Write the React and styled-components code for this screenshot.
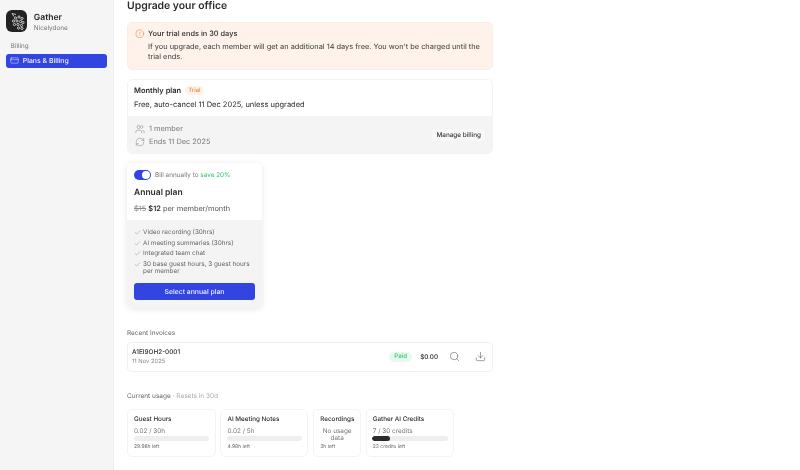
import React from 'react';
import styled, { createGlobalStyle } from 'styled-components';
import { Check, CircleAlert, CreditCard, Download, RefreshCw, Search, Users } from 'lucide-react';

const GlobalStyle = createGlobalStyle`
  html, body {
    margin: 0;
    height: 100%;
    overflow: hidden;
    background: #fff;
  }
  * {
    box-sizing: border-box;
  }
  body {
    font-family: Inter, "Liberation Sans", sans-serif;
    color: #2b2b2b;
    text-rendering: geometricPrecision;
  }
`;

const features = [
  'Video recording (30hrs)',
  'AI meeting summaries (30hrs)',
  'Integrated team chat',
  '30 base guest hours, 3 guest hours per member',
];

const usage = [
  { name: 'Guest Hours', value: '0.02 / 30h', left: '29.98h left', width: 88.7, fill: 0 },
  { name: 'AI Meeting Notes', value: '0.02 / 5h', left: '4.98h left', width: 88, fill: 0 },
  { name: 'Recordings', value: 'No usage data', left: '3h left', width: 47.7, empty: true },
  { name: 'Gather AI Credits', value: '7 / 30 credits', left: '23 credits left', width: 88.6, fill: 23 },
];

function Logo() {
  const dots = [
    [9.5, 8], [13, 7], [16, 8.5], [7.5, 11], [11, 11], [14.5, 11.5], [17, 12.5], [8.5, 14.5], [12, 14.5], [15.5, 15.5], [12.5, 18], [16, 18.5],
  ];
  return (
    <LogoBox>
      <svg width='21' height='22' viewBox='0 0 21 22' fill='none'>
        <path d='M6 3.5 L8 6.5 M6 3.5 L10 4.5' stroke='#e8e8e8' strokeWidth='0.8' />
        {dots.map(([cx, cy]) => (
          <circle key={`${cx}-${cy}`} cx={cx} cy={cy} r='1.1' stroke='#e8e8e8' strokeWidth='0.8' />
        ))}
      </svg>
    </LogoBox>
  );
}

function App() {
  return (
    <Page>
      <GlobalStyle />
      <Sidebar>
        <Brand>
          <Logo />
          <BrandText>
            <BrandName>Gather</BrandName>
            <BrandSub>Nicelydone</BrandSub>
          </BrandText>
        </Brand>
        <NavLabel>Billing</NavLabel>
        <NavItem>
          <CreditCard size={9} strokeWidth={1.3} />
          Plans &amp; Billing
        </NavItem>
      </Sidebar>
      <Main>
        <Title>Upgrade your office</Title>
        <Alert>
          <AlertHead>
            <CircleAlert size={9.5} color='#ee8a4a' strokeWidth={1.5} />
            Your trial ends in 30 days
          </AlertHead>
          <AlertText>
            If you upgrade, each member will get an additional 14 days free. You won't be charged until the trial ends.
          </AlertText>
        </Alert>
        <PlanCard>
          <PlanTop>
            <PlanHead>
              <PlanName>Monthly plan</PlanName>
              <TrialBadge>Trial</TrialBadge>
            </PlanHead>
            <PlanText>Free, auto-cancel 11 Dec 2025, unless upgraded</PlanText>
          </PlanTop>
          <PlanFooter>
            <MetaList>
              <MetaRow>
                <Users size={10} strokeWidth={1.1} />
                1 member
              </MetaRow>
              <MetaRow>
                <RefreshCw size={10} strokeWidth={1.1} />
                Ends 11 Dec 2025
              </MetaRow>
            </MetaList>
            <GhostButton>Manage billing</GhostButton>
          </PlanFooter>
        </PlanCard>
        <AnnualCard>
          <AnnualTop>
            <ToggleRow>
              <Toggle />
              <span>Bill annually to <Save>save 20%</Save></span>
            </ToggleRow>
            <AnnualName>Annual plan</AnnualName>
            <Price>
              <s>$15</s> <strong>$12</strong> per member/month
            </Price>
          </AnnualTop>
          <AnnualBottom>
            <FeatureList>
              {features.map((feature) => (
                <Feature key={feature}>
                  <Check size={7} strokeWidth={1.2} />
                  <span>{feature}</span>
                </Feature>
              ))}
            </FeatureList>
            <PrimaryButton>Select annual plan</PrimaryButton>
          </AnnualBottom>
        </AnnualCard>
        <SectionLabel>Recent Invoices</SectionLabel>
        <Invoice>
          <div>
            <InvoiceId>A1EI9OH2-0001</InvoiceId>
            <InvoiceDate>11 Nov 2025</InvoiceDate>
          </div>
          <InvoiceRight>
            <PaidBadge>Paid</PaidBadge>
            <Amount>$0.00</Amount>
            <IconSlot><Search size={11} strokeWidth={1.1} /></IconSlot>
            <IconSlot><Download size={11} strokeWidth={1.1} /></IconSlot>
          </InvoiceRight>
        </Invoice>
        <UsageLabel>
          Current usage <Muted>· Resets in 30d</Muted>
        </UsageLabel>
        <UsageRow>
          {usage.map((item) => (
            <UsageCard key={item.name} $width={item.width}>
              <UsageName>{item.name}</UsageName>
              {item.empty ? (
                <NoData>{item.value}</NoData>
              ) : (
                <>
                  <UsageValue>{item.value}</UsageValue>
                  <Track>{item.fill > 0 && <Fill style={{ width: `${item.fill}%` }} />}</Track>
                </>
              )}
              <UsageLeft>{item.left}</UsageLeft>
            </UsageCard>
          ))}
        </UsageRow>
      </Main>
    </Page>
  );
}

const Page = styled.div`
  display: flex;
  width: 800px;
  height: 470px;
  overflow: hidden;
  will-change: transform;
`;

const Sidebar = styled.aside`
  width: 114px;
  flex-shrink: 0;
  padding: 10px 6.3px;
  background: #f5f5f5;
  border-right: 1px solid #efefef;
`;

const Brand = styled.div`
  display: flex;
  align-items: flex-start;
  gap: 6.5px;
`;

const LogoBox = styled.div`
  width: 21px;
  height: 22px;
  border-radius: 6px;
  background: #232323;
  display: flex;
`;

const BrandText = styled.div`
  padding-top: 1.5px;
`;

const BrandName = styled.div`
  font-size: 8.6px;
  font-weight: 600;
  line-height: 12px;
`;

const BrandSub = styled.div`
  font-size: 6.4px;
  line-height: 9px;
  color: #777;
`;

const NavLabel = styled.div`
  margin: 9.5px 0 0 4.5px;
  font-size: 6.3px;
  line-height: 9px;
  color: #777;
`;

const NavItem = styled.div`
  display: flex;
  align-items: center;
  gap: 3.5px;
  height: 14.5px;
  margin-top: 2.5px;
  padding-left: 4px;
  border-radius: 3px;
  background: #3245e0;
  color: #f2f3ff;
  font-size: 6.9px;
  font-weight: 500;
`;

const Main = styled.main`
  width: 366px;
  margin: -2px 0 0 13px;
`;

const Title = styled.h1`
  margin: 0;
  font-size: 10.4px;
  font-weight: 600;
  line-height: 15px;
`;

const Alert = styled.div`
  margin-top: 8.5px;
  height: 48.5px;
  padding: 6px 7px;
  background: #fef2ea;
  border: 1px solid #fcede3;
  border-radius: 5px;
`;

const AlertHead = styled.div`
  display: flex;
  align-items: center;
  gap: 3.5px;
  font-size: 7.4px;
  font-weight: 500;
  line-height: 10px;
`;

const AlertText = styled.p`
  margin: 3px 0 0 13px;
  font-size: 7.4px;
  line-height: 10.3px;
  color: #3a3a3a;
`;

const PlanCard = styled.section`
  margin-top: 8.5px;
  border: 1px solid #f3f3f3;
  border-radius: 5px;
  overflow: hidden;
`;

const PlanTop = styled.div`
  height: 36px;
  padding: 6px 6px;
`;

const PlanHead = styled.div`
  display: flex;
  align-items: center;
  gap: 4px;
`;

const PlanName = styled.span`
  font-size: 7.5px;
  font-weight: 600;
  line-height: 10px;
`;

const TrialBadge = styled.span`
  padding: 0 3px;
  border-radius: 5px;
  background: #fef2ea;
  color: #ee8a4a;
  font-size: 6px;
  font-weight: 500;
  line-height: 9.5px;
`;

const PlanText = styled.div`
  margin-top: 4px;
  font-size: 7.5px;
  line-height: 10px;
`;

const PlanFooter = styled.div`
  display: flex;
  align-items: center;
  justify-content: space-between;
  height: 37.5px;
  padding: 2px 7px 0;
  background: #f4f4f4;
`;

const MetaList = styled.div`
  display: flex;
  flex-direction: column;
  gap: 3.5px;
`;

const MetaRow = styled.div`
  display: flex;
  align-items: center;
  gap: 4px;
  font-size: 7.4px;
  line-height: 10px;
  color: #777;
`;

const GhostButton = styled.button`
  height: 12px;
  padding: 0 4px;
  border: 0;
  border-radius: 3px;
  background: #f8f8f8;
  color: #333;
  font: 500 6.4px Inter, sans-serif;
  text-rendering: geometricPrecision;
`;

const AnnualCard = styled.section`
  width: 135px;
  margin-top: 9px;
  border-radius: 5px;
  overflow: hidden;
  box-shadow: 0 1px 6px rgba(0, 0, 0, 0.1);
`;

const AnnualTop = styled.div`
  height: 57px;
  padding: 7px 7px;
`;

const ToggleRow = styled.div`
  display: flex;
  align-items: center;
  gap: 4px;
  font-size: 6.4px;
  line-height: 10px;
  color: #777;
`;

const Toggle = styled.div`
  position: relative;
  width: 17px;
  height: 10px;
  border-radius: 5px;
  background: #3245e0;

  &::after {
    content: '';
    position: absolute;
    top: 1px;
    right: 1px;
    width: 8px;
    height: 8px;
    border-radius: 50%;
    background: #fff;
  }
`;

const Save = styled.span`
  color: #2fc46a;
`;

const AnnualName = styled.div`
  margin-top: 8px;
  font-size: 8.5px;
  font-weight: 600;
  line-height: 11px;
`;

const Price = styled.div`
  margin-top: 4px;
  font-size: 7.4px;
  line-height: 11px;
  color: #555;

  s {
    color: #888;
  }
  strong {
    color: #2b2b2b;
    font-weight: 600;
  }
`;

const AnnualBottom = styled.div`
  height: 88px;
  padding: 9px 7px;
  background: #f4f4f4;
`;

const FeatureList = styled.ul`
  margin: 0;
  padding: 0;
  list-style: none;
`;

const Feature = styled.li`
  display: flex;
  align-items: flex-start;
  gap: 2px;
  margin-bottom: 2.8px;
  font-size: 6.35px;
  line-height: 7.7px;
  color: #666;

  svg {
    flex-shrink: 0;
  }
`;

const PrimaryButton = styled.button`
  display: block;
  width: 100%;
  height: 17.5px;
  margin-top: 7px;
  border: 0;
  border-radius: 3px;
  background: #3245e0;
  color: #eef0ff;
  font: 500 6.85px Inter, sans-serif;
  text-rendering: geometricPrecision;
`;

const SectionLabel = styled.div`
  margin-top: 20.5px;
  font-size: 6.45px;
  line-height: 9px;
  color: #666;
`;

const Invoice = styled.div`
  display: flex;
  align-items: center;
  justify-content: space-between;
  height: 29.5px;
  margin-top: 4.5px;
  padding: 0 0 0 4px;
  border: 1px solid #f0f0f0;
  border-radius: 4px;
`;

const InvoiceId = styled.div`
  font-size: 6.4px;
  font-weight: 500;
  line-height: 9px;
`;

const InvoiceDate = styled.div`
  font-size: 5.8px;
  line-height: 9px;
  color: #888;
`;

const InvoiceRight = styled.div`
  display: flex;
  align-items: center;
  margin-right: -1px;
`;

const PaidBadge = styled.span`
  padding: 1.5px 5px;
  border-radius: 5px;
  background: #e7f9ee;
  color: #3cc777;
  font-size: 6.2px;
  font-weight: 500;
`;

const Amount = styled.span`
  margin: 0 3px 0 8px;
  font-size: 6.3px;
  font-weight: 500;
`;

const IconSlot = styled.span`
  display: flex;
  justify-content: center;
  width: 26px;
  color: #444;
`;

const UsageLabel = styled.div`
  margin-top: 20px;
  font-size: 6.5px;
  line-height: 9px;
  color: #666;
`;

const Muted = styled.span`
  color: #aaa;
`;

const UsageRow = styled.div`
  display: flex;
  gap: 4.8px;
  margin-top: 8px;
`;

const UsageCard = styled.div`
  display: flex;
  flex-direction: column;
  width: ${(props) => props.$width}px;
  height: 48.5px;
  padding: 5.5px 5.5px 5px;
  border: 1px solid #f3f3f3;
  border-radius: 5px;
`;

const UsageName = styled.div`
  font-size: 6.3px;
  font-weight: 500;
  line-height: 9px;
  white-space: nowrap;
  padding-left: 0.5px;
`;

const UsageValue = styled.div`
  margin-top: 2.5px;
  font-size: 6.4px;
  line-height: 9px;
  color: #777;
  padding-left: 0.5px;
`;

const NoData = styled.div`
  margin-top: 3.5px;
  font-size: 6.4px;
  line-height: 7.5px;
  color: #777;
  text-align: center;
`;

const Track = styled.div`
  height: 5px;
  border-radius: 3px;
  background: #eee;
  overflow: hidden;
`;

const Fill = styled.div`
  height: 100%;
  border-radius: 3px;
  background: #2b2b2b;
`;

const UsageLeft = styled.div`
  margin-top: auto;
  font-size: 5px;
  line-height: 8px;
  color: #666;
  padding-left: 0.5px;
`;

export default App;
